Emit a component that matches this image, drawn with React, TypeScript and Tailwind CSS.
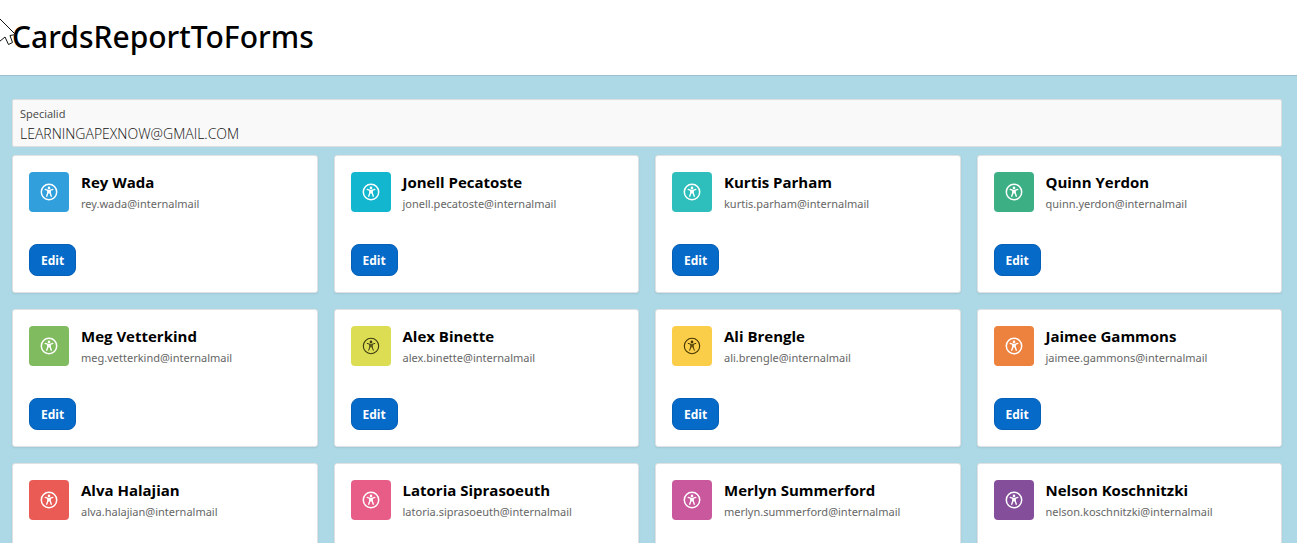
type Person = { name: string; email: string; tile: string };

const people: Person[] = [
  { name: "Rey Wada", email: "rey.wada@internalmail", tile: "bg-[#309fdb] text-white" },
  { name: "Jonell Pecatoste", email: "jonell.pecatoste@internalmail", tile: "bg-[#13b6cf] text-white" },
  { name: "Kurtis Parham", email: "kurtis.parham@internalmail", tile: "bg-[#2ebfbc] text-white" },
  { name: "Quinn Yerdon", email: "quinn.yerdon@internalmail", tile: "bg-[#3caf85] text-white" },
  { name: "Meg Vetterkind", email: "meg.vetterkind@internalmail", tile: "bg-[#81bb5f] text-white" },
  { name: "Alex Binette", email: "alex.binette@internalmail", tile: "bg-[#dddd53] text-[#3a3a12]" },
  { name: "Ali Brengle", email: "ali.brengle@internalmail", tile: "bg-[#fbce4a] text-[#443404]" },
  { name: "Jaimee Gammons", email: "jaimee.gammons@internalmail", tile: "bg-[#ed813e] text-white" },
  { name: "Alva Halajian", email: "alva.halajian@internalmail", tile: "bg-[#e95b54] text-white" },
  { name: "Latoria Siprasoeuth", email: "latoria.siprasoeuth@internalmail", tile: "bg-[#e85d88] text-white" },
  { name: "Merlyn Summerford", email: "merlyn.summerford@internalmail", tile: "bg-[#ca589d] text-white" },
  { name: "Nelson Koschnitzki", email: "nelson.koschnitzki@internalmail", tile: "bg-[#854e9b] text-white" },
];

function AccessIcon({ dark }: { dark: boolean }) {
  return (
    <svg viewBox="0 0 18 18" className="size-[18px]" fill="none" aria-hidden="true">
      <circle cx="9" cy="9" r="7.7" stroke="currentColor" strokeWidth={dark ? 1.1 : 1.5} />
      <circle cx="9" cy="4.9" r="1.3" fill="currentColor" />
      <path
        d="M5.2 6.4 7.9 7.3 V9.8 L6.7 13.2 M12.8 6.4 10.1 7.3 V9.8 L11.3 13.2"
        stroke="currentColor"
        strokeWidth={dark ? 1 : 1.4}
        strokeLinecap="round"
        strokeLinejoin="round"
      />
      <path d="M7.5 6.8h3v3.6h-3z" fill="currentColor" opacity={dark ? 0.7 : 1} />
    </svg>
  );
}

function Card({ person }: { person: Person }) {
  return (
    <li className="flex flex-col items-start gap-8 rounded-[3px] border border-[#dfe1e2] bg-white p-4 shadow-[0_1px_2px_rgba(0,0,0,0.08)]">
      <div className="flex gap-3">
        <span className={`flex size-10 shrink-0 items-center justify-center rounded-sm ${person.tile}`}>
          <AccessIcon dark={!person.tile.includes("text-white")} />
        </span>
        <div className="h-10 whitespace-nowrap">
          <h3 className="text-[15px] leading-5 font-bold text-black">{person.name}</h3>
          <p className="font-['Noto_Sans',sans-serif] text-[11px] leading-6 text-[#666]">{person.email}</p>
        </div>
      </div>
      <button
        type="button"
        className="h-8 rounded-lg border border-[#0560b8] bg-[#056ac8] px-[11px] pt-px text-[12px] leading-4 font-bold text-white"
      >
        Edit
      </button>
    </li>
  );
}

export default function App() {
  return (
    <div className="min-h-screen bg-[#add8e6] font-['Open_Sans','Noto_Sans',sans-serif]">
      <header className="relative border-b border-[#9fbecb] bg-white px-3 pt-[17px] pb-[18px]">
        <h1 className="font-['Noto_Sans',sans-serif] text-[30px] leading-10 font-medium text-black">
          CardsReportToForms
        </h1>
        <svg viewBox="0 0 16 32" className="absolute top-4 left-0 h-8 w-4" fill="none" aria-hidden="true">
          <path
            d="M-.5 2.5 15.5 18.5 10 19.5 12.5 26.5 8.5 28.5 5 21 -.5 25.5"
            fill="white"
            stroke="#111"
            strokeWidth="1"
          />
        </svg>
      </header>
      <main className="flex flex-col gap-2 pt-[23px] pr-[15px] pb-4 pl-3">
        <div className="flex flex-col rounded-xs border border-[#dcdedf] bg-[#f9f9f9] px-[7px] pt-[6px] pb-[2px]">
          <label htmlFor="specialid" className="text-[11px] leading-4 text-[#444]">
            Specialid
          </label>
          <input
            id="specialid"
            readOnly
            value="LEARNINGAPEXNOW@GMAIL.COM"
            className="h-[22px] w-full bg-transparent text-[14px] font-light text-[#111] outline-none"
          />
        </div>
        <ul className="grid grid-cols-4 gap-4">
          {people.map((person) => (
            <Card key={person.email} person={person} />
          ))}
        </ul>
      </main>
    </div>
  );
}
